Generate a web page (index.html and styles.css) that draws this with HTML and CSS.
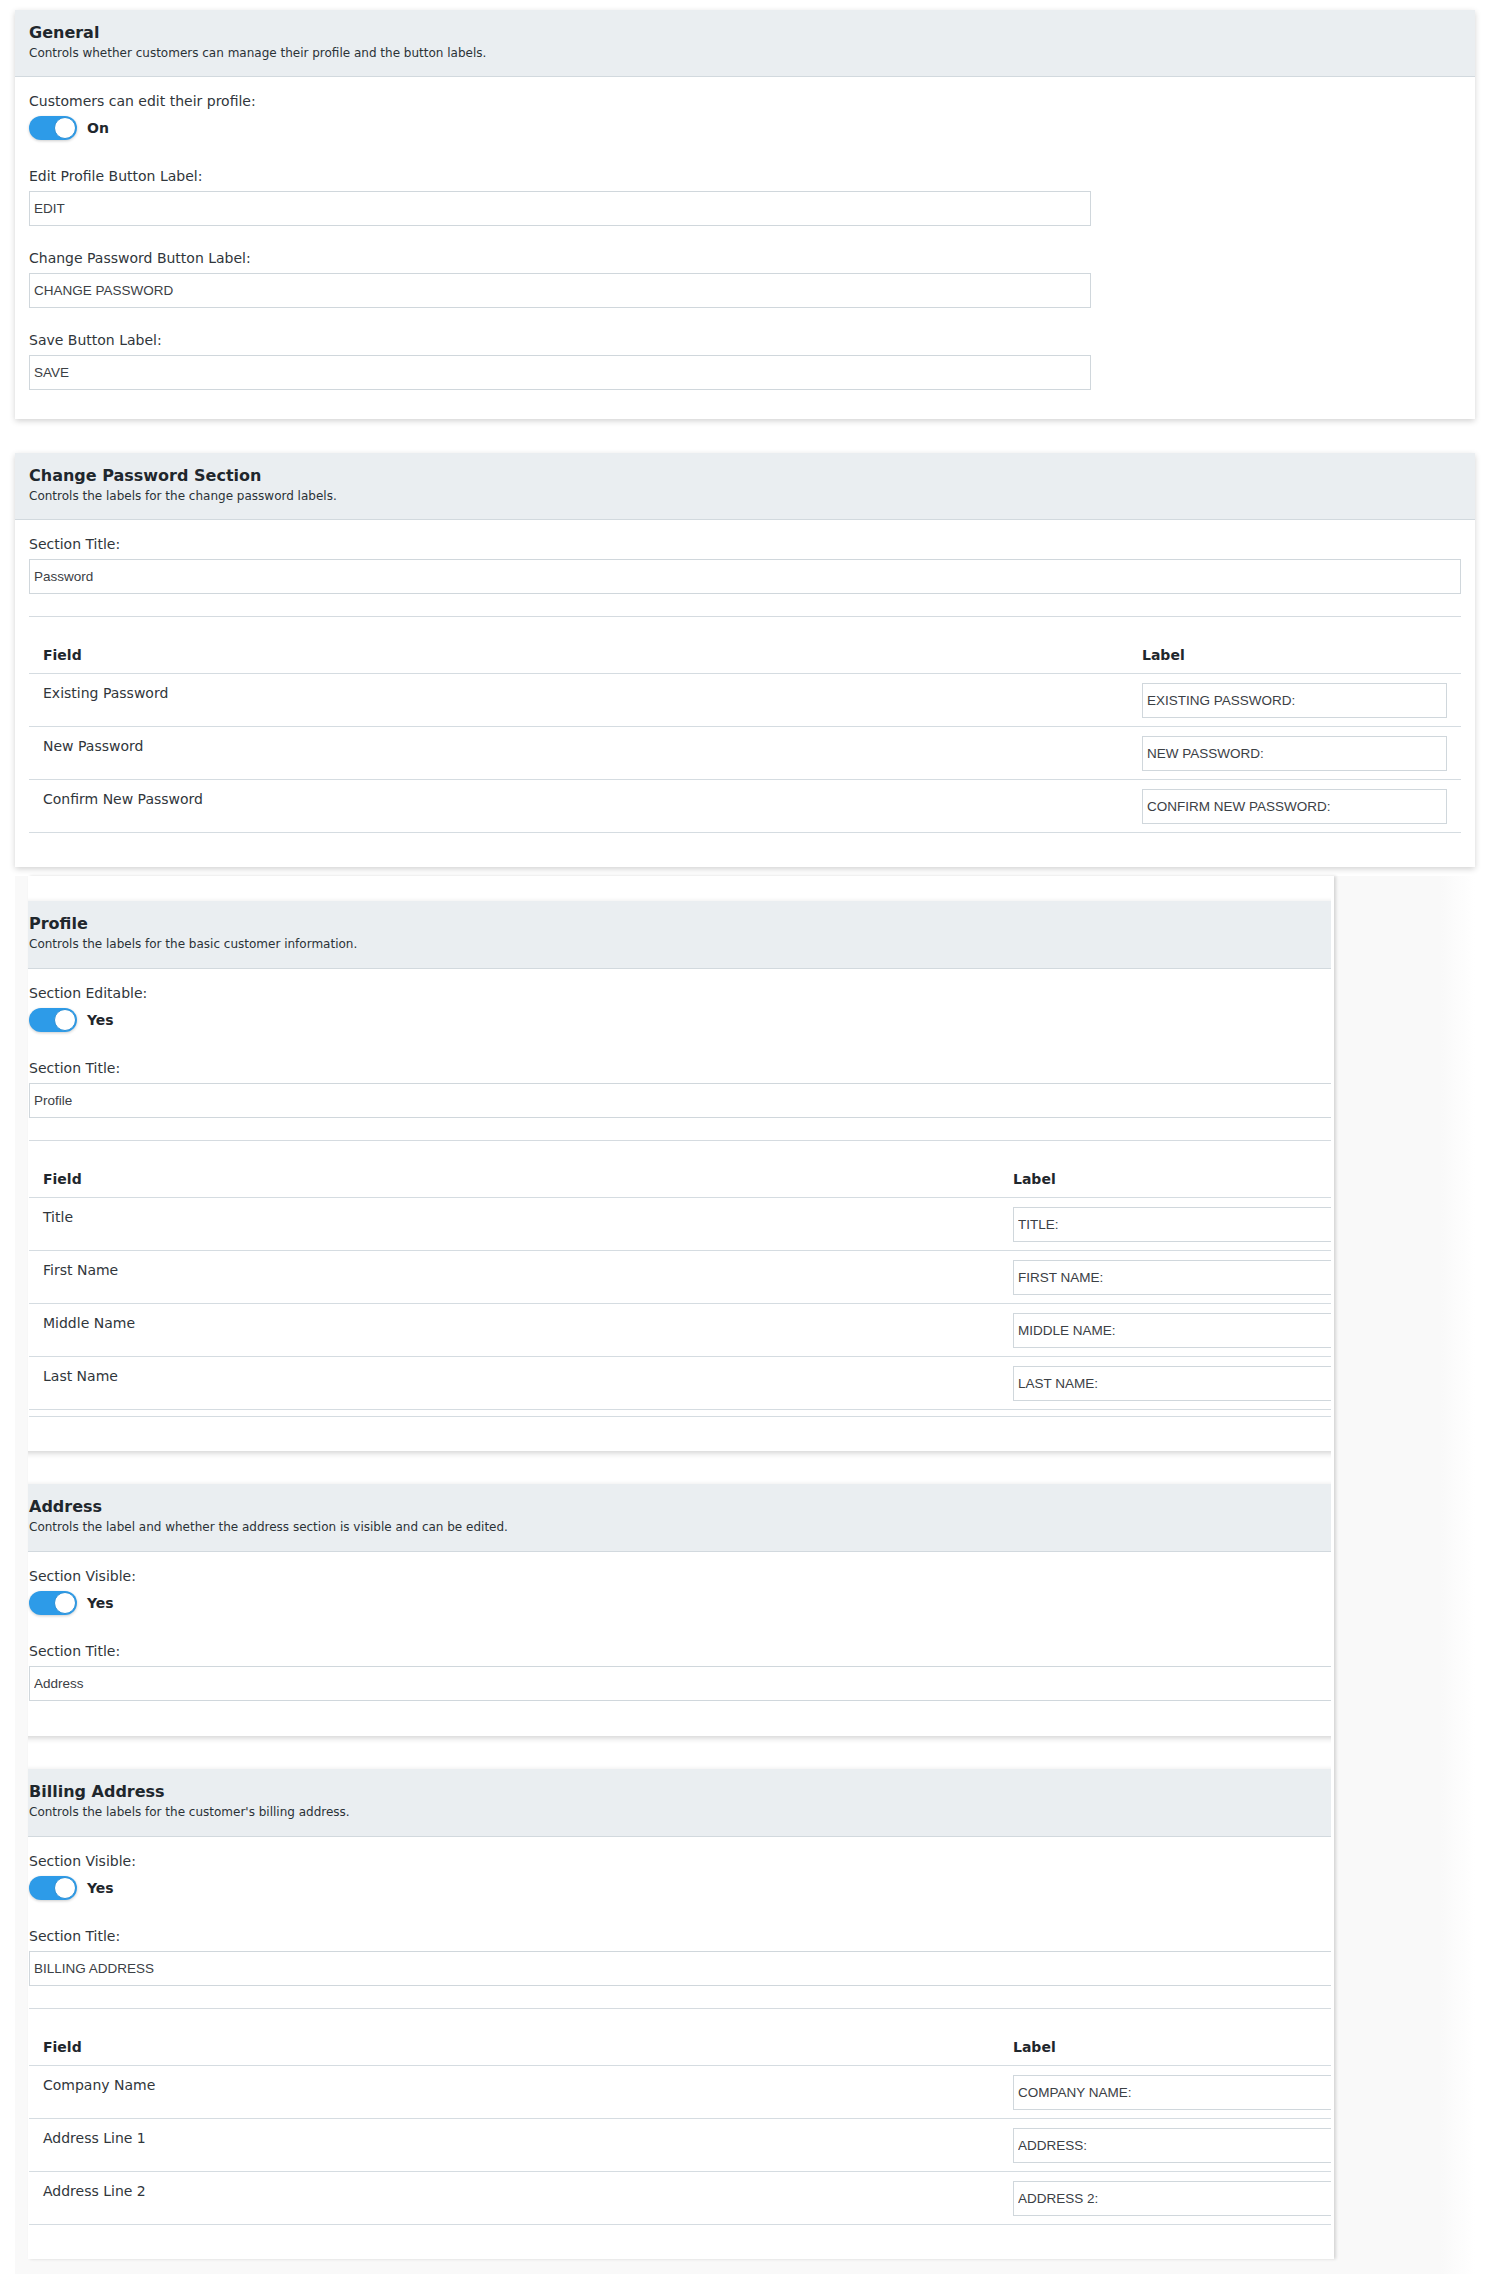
FILE: index.html
```html
<!DOCTYPE html>
<html lang="en">
<head>
  <meta charset="UTF-8" />
  <meta name="viewport" content="width=device-width, initial-scale=1.0" />
  <title>Customer Profile Settings</title>
  <link rel="stylesheet" href="styles.css">
</head>
<body>
  <div class="page">

    <!-- General -->
    <section class="card">
      <div class="card-head">
        <h2>General</h2>
        <p>Controls whether customers can manage their profile and the button labels.</p>
      </div>
      <div class="card-body">
        <div class="field field-toggle">
          <label>Customers can edit their profile:</label>
          <div class="switch-row">
            <span class="switch"><span class="knob"></span></span>
            <b>On</b>
          </div>
        </div>
        <div class="field">
          <label>Edit Profile Button Label:</label>
          <input class="text-input short" type="text" value="EDIT">
        </div>
        <div class="field">
          <label>Change Password Button Label:</label>
          <input class="text-input short" type="text" value="CHANGE PASSWORD">
        </div>
        <div class="field">
          <label>Save Button Label:</label>
          <input class="text-input short" type="text" value="SAVE">
        </div>
      </div>
    </section>

    <!-- Change Password -->
    <section class="card">
      <div class="card-head">
        <h2>Change Password Section</h2>
        <p>Controls the labels for the change password labels.</p>
      </div>
      <div class="card-body">
        <div class="field">
          <label>Section Title:</label>
          <input class="text-input" type="text" value="Password">
        </div>
        <hr class="divider">
        <table class="map-table">
          <thead>
            <tr><th>Field</th><th class="label-col">Label</th></tr>
          </thead>
          <tbody>
            <tr><td>Existing Password</td><td><input class="text-input" type="text" value="EXISTING PASSWORD:"></td></tr>
            <tr><td>New Password</td><td><input class="text-input" type="text" value="NEW PASSWORD:"></td></tr>
            <tr><td>Confirm New Password</td><td><input class="text-input" type="text" value="CONFIRM NEW PASSWORD:"></td></tr>
          </tbody>
        </table>
      </div>
    </section>

    <!-- Embedded preview panel -->
    <div class="frame">
      <div class="pane">
        <div class="pane-clip">

          <section class="card">
            <div class="card-head">
              <h2>Profile</h2>
              <p>Controls the labels for the basic customer information.</p>
            </div>
            <div class="card-body">
              <div class="field field-toggle">
                <label>Section Editable:</label>
                <div class="switch-row">
                  <span class="switch"><span class="knob"></span></span>
                  <b>Yes</b>
                </div>
              </div>
              <div class="field">
                <label>Section Title:</label>
                <input class="text-input" type="text" value="Profile">
              </div>
              <hr class="divider">
              <table class="map-table wide">
                <thead>
                  <tr><th>Field</th><th class="label-col">Label</th></tr>
                </thead>
                <tbody>
                  <tr><td>Title</td><td><input class="text-input" type="text" value="TITLE:"></td></tr>
                  <tr><td>First Name</td><td><input class="text-input" type="text" value="FIRST NAME:"></td></tr>
                  <tr><td>Middle Name</td><td><input class="text-input" type="text" value="MIDDLE NAME:"></td></tr>
                  <tr><td>Last Name</td><td><input class="text-input" type="text" value="LAST NAME:"></td></tr>
                  <tr class="empty-row"><td></td><td></td></tr>
                </tbody>
              </table>
            </div>
          </section>

          <section class="card">
            <div class="card-head">
              <h2>Address</h2>
              <p>Controls the label and whether the address section is visible and can be edited.</p>
            </div>
            <div class="card-body">
              <div class="field field-toggle">
                <label>Section Visible:</label>
                <div class="switch-row">
                  <span class="switch"><span class="knob"></span></span>
                  <b>Yes</b>
                </div>
              </div>
              <div class="field">
                <label>Section Title:</label>
                <input class="text-input" type="text" value="Address">
              </div>
              <div class="spacer"></div>
            </div>
          </section>

          <section class="card">
            <div class="card-head">
              <h2>Billing Address</h2>
              <p>Controls the labels for the customer's billing address.</p>
            </div>
            <div class="card-body">
              <div class="field field-toggle">
                <label>Section Visible:</label>
                <div class="switch-row">
                  <span class="switch"><span class="knob"></span></span>
                  <b>Yes</b>
                </div>
              </div>
              <div class="field">
                <label>Section Title:</label>
                <input class="text-input" type="text" value="BILLING ADDRESS">
              </div>
              <hr class="divider">
              <table class="map-table wide">
                <thead>
                  <tr><th>Field</th><th class="label-col">Label</th></tr>
                </thead>
                <tbody>
                  <tr><td>Company Name</td><td><input class="text-input" type="text" value="COMPANY NAME:"></td></tr>
                  <tr><td>Address Line 1</td><td><input class="text-input" type="text" value="ADDRESS:"></td></tr>
                  <tr><td>Address Line 2</td><td><input class="text-input" type="text" value="ADDRESS 2:"></td></tr>
                </tbody>
              </table>
            </div>
          </section>

        </div>
      </div>
    </div>

  </div>
</body>
</html>
```

FILE: styles.css
```css
body {
  margin: 0;
  font-family: 'DejaVu Sans', Verdana, sans-serif;
  color: #2e3439;
  background-color: #ffffff;
}

.page {
  padding: 10px 0 0 15px;
  width: 1460px;
}

/* Cards */
.card {
  width: 1460px;
  background-color: #ffffff;
  box-shadow: 0 2px 6px rgba(0, 0, 0, 0.18);
  margin-bottom: 34px;
}

.card-head {
  background-color: #eaeef1;
  border-bottom: 1px solid #d2d9de;
  padding: 12px 14px 13px;
  height: 41px;
}

.card-head h2 {
  margin: 0;
  font-size: 16px;
  line-height: 22px;
  color: #1f272d;
}

.card-head p {
  margin: 0;
  font-size: 12px;
  line-height: 18px;
  color: #2b3237;
}

.card-body {
  padding: 14px 14px 7px;
}

/* Form fields */
.field {
  margin-bottom: 22px;
}

.field label {
  display: block;
  font-size: 14px;
  line-height: 20px;
  margin-bottom: 5px;
  color: #30363b;
}

.field-toggle {
  margin-bottom: 26px;
}

.text-input {
  display: block;
  box-sizing: border-box;
  width: 100%;
  height: 35px;
  margin: 0;
  padding: 0 4px;
  border: 1px solid #d0d7dc;
  border-radius: 0;
  font-family: 'Liberation Sans', Arial, sans-serif;
  font-size: 13.5px;
  color: #3b4045;
  background-color: #ffffff;
}

.text-input.short {
  width: 1062px;
}

/* Toggle switch */
.switch-row {
  display: flex;
  align-items: center;
  gap: 10px;
  height: 24px;
}

.switch {
  display: flex;
  justify-content: flex-end;
  align-items: center;
  box-sizing: border-box;
  width: 48px;
  height: 24px;
  padding: 1px;
  border-radius: 12px;
  background-color: #2d9be8;
  box-shadow: 0 1px 3px rgba(0, 0, 0, 0.2);
}

.switch .knob {
  width: 20px;
  height: 20px;
  border-radius: 50%;
  background-color: #ffffff;
  border: 1px solid #2a8fd6;
}

.switch-row b {
  font-size: 14px;
  color: #1f272d;
}

/* Divider */
.divider {
  border: 0;
  border-top: 1px solid #d5dbe0;
  margin: 0 0 19px;
}

/* Field / label table */
.map-table {
  width: 100%;
  border-collapse: collapse;
  margin-bottom: 27px;
  font-size: 14px;
}

.map-table th,
.map-table td {
  text-align: left;
  vertical-align: top;
  padding: 9px 14px 8px;
  line-height: 20px;
  border-bottom: 1px solid #d5dce1;
}

.map-table th {
  color: #1f272d;
}

.map-table td {
  color: #30363b;
}

.map-table .label-col {
  width: 305px;
}

.map-table.wide .label-col {
  width: 434px;
}

.map-table .empty-row td {
  padding: 0;
  height: 6px;
}

.spacer {
  height: 6px;
}

/* Embedded preview panel */
.frame {
  margin-top: -25px;
  padding-bottom: 15px;
  background: linear-gradient(to right, #f9f9f9 0, #f9f9f9 1425px, #ffffff 1460px);
}

.pane {
  margin-left: 13px;
  width: 1306px;
  background-color: #ffffff;
  box-shadow: 2px 0 3px rgba(0, 0, 0, 0.15);
}

.pane-clip {
  width: 1303px;
  overflow: hidden;
  padding-top: 25px;
}

.pane-clip .card {
  margin-left: -13px;
  margin-bottom: 33px;
}

.pane-clip .card-head {
  height: 42px;
}

.pane-clip .card:last-child {
  margin-bottom: 0;
}
```
